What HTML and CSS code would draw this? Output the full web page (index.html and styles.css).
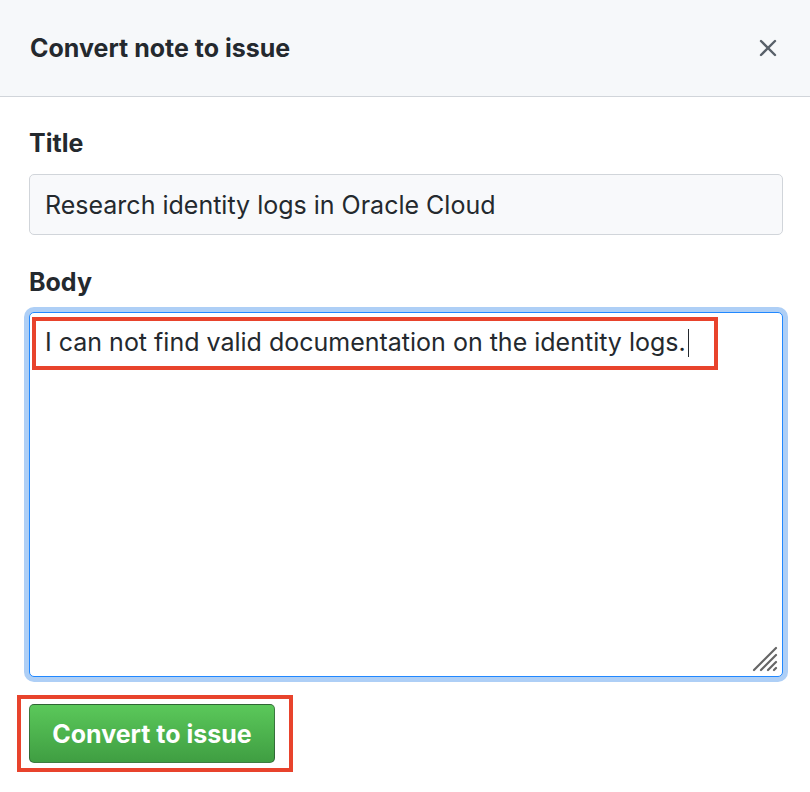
FILE: index.html
```html
<!DOCTYPE html>
<html>
<head>
<meta charset="utf-8">
<link rel="stylesheet" href="styles.css">
</head>
<body>
<div class="dialog">
  <div class="header">
    <h2 class="header-title">Convert note to issue</h2>
    <svg class="close" width="18" height="18" viewBox="0 0 18 18"><path d="M2 2 L16 16 M16 2 L2 16" stroke="#586069" stroke-width="2.4" stroke-linecap="round"/></svg>
  </div>
  <div class="content">
    <label class="label label-title">Title</label>
    <div class="input">Research identity logs in Oracle Cloud</div>
    <label class="label label-body">Body</label>
    <div class="textarea">
      <div class="textarea-text">I can not find valid documentation on the identity logs.<span class="caret"></span></div>
      <div class="annot annot-text"></div>
      <svg class="grip" width="26" height="26" viewBox="0 0 26 26">
        <path d="M2 24 L24 2 M9 24 L24 9 M16 24 L24 16 M22 24 L24 22" stroke="#666" stroke-width="2.2" stroke-linecap="round"/>
      </svg>
    </div>
    <div class="actions">
      <button class="btn">Convert to issue</button>
      <div class="annot annot-btn"></div>
    </div>
  </div>
</div>
</body>
</html>
```
FILE: styles.css
```css
html, body {
  margin: 0;
  padding: 0;
  background: #fff;
}
body {
  font-family: Inter, "Liberation Sans", Arial, sans-serif;
  color: #24292e;
  width: 810px;
  height: 792px;
  overflow: hidden;
}
.header {
  height: 96px;
  background: #f6f8fa;
  border-bottom: 1px solid #d1d5da;
  display: flex;
  align-items: center;
  justify-content: space-between;
  padding: 0 33px 0 30px;
}
.header-title {
  margin: 0;
  font-size: 25px;
  font-weight: 700;
  color: #24292e;
}
.close {
  display: block;
}
.content {
  padding: 0 27px 0 29px;
}
.label {
  display: block;
  font-size: 25px;
  font-weight: 700;
  line-height: 30px;
}
.label-title {
  margin-top: 31px;
}
.input {
  margin-top: 16px;
  height: 61px;
  box-sizing: border-box;
  border: 1px solid #d1d5da;
  border-radius: 5px;
  background: #f8f9fb;
  font-size: 25px;
  padding: 0 15px;
  display: flex;
  align-items: center;
}
.label-body {
  margin-top: 32px;
}
.textarea {
  position: relative;
  margin-top: 15px;
  height: 365px;
  box-sizing: border-box;
  border: 1px solid #2188ff;
  border-radius: 5px;
  box-shadow: 0 0 0 5px #aecff6;
  background: #fff;
}
.textarea-text {
  font-size: 25px;
  padding: 14px 15px;
  line-height: 30px;
}
.caret {
  display: inline-block;
  width: 1px;
  height: 28px;
  background: #24292e;
  vertical-align: -6px;
  margin-left: 2px;
}
.annot {
  position: absolute;
  border: 4px solid #e8432c;
  box-sizing: border-box;
}
.annot-text {
  left: 2px;
  top: 4px;
  width: 686px;
  height: 53px;
}
.grip {
  position: absolute;
  right: 4px;
  bottom: 4px;
}
.actions {
  position: relative;
  margin-top: 27px;
}
.btn {
  display: block;
  width: 246px;
  height: 59px;
  border: 1px solid rgba(27, 31, 35, 0.45);
  border-radius: 5px;
  background: linear-gradient(#5bc85a, #3f9e42);
  color: #fff;
  font-family: Inter, "Liberation Sans", Arial, sans-serif;
  font-size: 25px;
  font-weight: 700;
  padding: 0;
}
.annot-btn {
  left: -12px;
  top: -9px;
  width: 276px;
  height: 77px;
}
```
